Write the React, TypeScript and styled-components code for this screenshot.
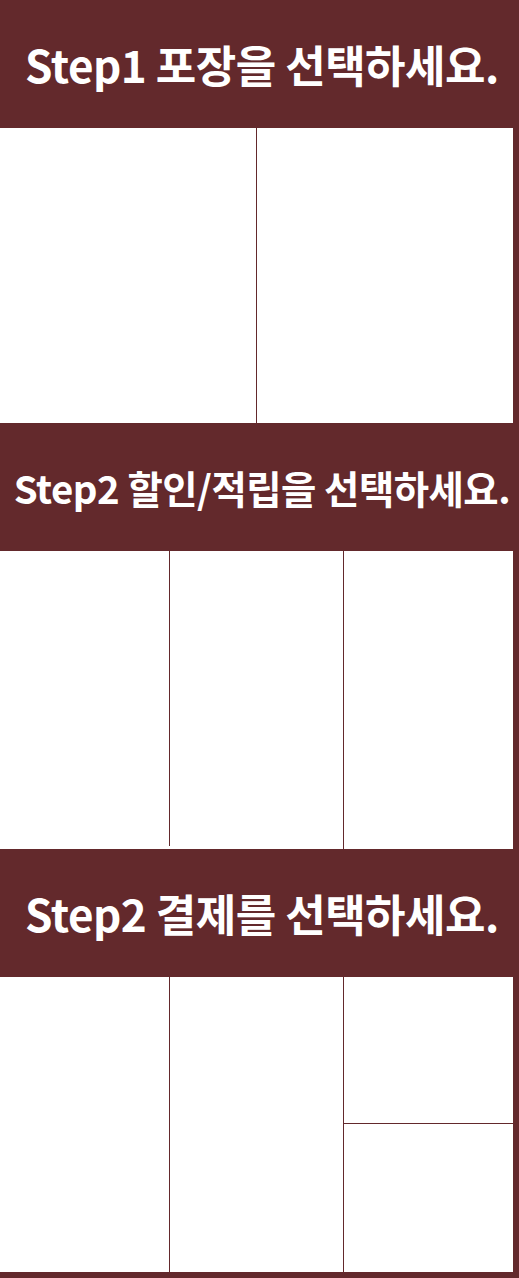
import React from "react";
import styled, { createGlobalStyle } from "styled-components";

const BRAND = "#63292c";

const GlobalStyle = createGlobalStyle`
  html, body {
    margin: 0;
    padding: 0;
    background: #ffffff;
  }
  body {
    font-family: "Noto Sans CJK KR", "Noto Sans", sans-serif;
  }
`;

const Page = styled.div`
  width: 519px;
  background: ${BRAND};
  padding-bottom: 6px;
  display: flex;
  flex-direction: column;
`;

const StepHeader = styled.h2<{ $size: number }>`
  margin: 0;
  height: 128px;
  display: flex;
  align-items: center;
  justify-content: center;
  padding-left: 5px;
  box-sizing: border-box;
  background: ${BRAND};
  color: #ffffff;
  font-family: "Noto Sans CJK KR", "Noto Sans", sans-serif;
  font-weight: 700;
  font-size: ${(p) => p.$size}px;
  letter-spacing: -0.5px;
  white-space: nowrap;
`;

const Options = styled.div<{ $cols: string; $height: number }>`
  margin-right: 6px;
  height: ${(p) => p.$height}px;
  background: #ffffff;
  display: grid;
  grid-template-columns: ${(p) => p.$cols};
`;

const Option = styled.div<{ $divider?: boolean; $short?: number }>`
  box-sizing: border-box;
  background: #ffffff;
  border-right: ${(p) => (p.$divider ? `1px solid ${BRAND}` : "none")};
  height: ${(p) => (p.$short ? `calc(100% - ${p.$short}px)` : "100%")};
`;

const Stack = styled.div`
  display: grid;
  grid-template-rows: 147px 1fr;
`;

const StackCell = styled.div<{ $divider?: boolean }>`
  background: #ffffff;
  border-bottom: ${(p) => (p.$divider ? `1px solid ${BRAND}` : "none")};
`;

export default function App() {
  return (
    <>
      <GlobalStyle />
      <Page>
        <StepHeader $size={44}>Step1 포장을 선택하세요.</StepHeader>
        <Options $cols="257px 1fr" $height={295}>
          <Option $divider />
          <Option />
        </Options>

        <StepHeader $size={38.4}>Step2 할인/적립을 선택하세요.</StepHeader>
        <Options $cols="170px 174px 1fr" $height={298}>
          <Option $divider $short={3} />
          <Option $divider />
          <Option />
        </Options>

        <StepHeader $size={44}>Step2 결제를 선택하세요.</StepHeader>
        <Options $cols="170px 174px 1fr" $height={295}>
          <Option $divider />
          <Option $divider />
          <Stack>
            <StackCell $divider />
            <StackCell />
          </Stack>
        </Options>
      </Page>
    </>
  );
}
